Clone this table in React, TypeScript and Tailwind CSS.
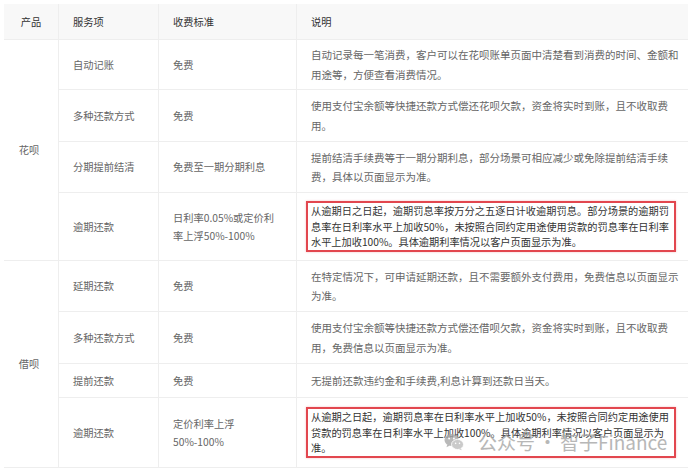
import React from 'react';

type Line = { t: string; w?: number };
type Row = {
  service: string;
  fee: string[];
  desc: Line[];
  highlight?: boolean;
};

const huabei: Row[] = [
  {
    service: '自动记账',
    fee: ['免费'],
    desc: [{ t: '自动记录每一笔消费，客户可以在花呗账单页面中清楚看到消费的时间、金额和', w: 358 }, { t: '用途等，方便查看消费情况。' }],
  },
  {
    service: '多种还款方式',
    fee: ['免费'],
    desc: [{ t: '使用支付宝余额等快捷还款方式偿还花呗欠款，资金将实时到账，且不收取费', w: 347 }, { t: '用。' }],
  },
  {
    service: '分期提前结清',
    fee: ['免费至一期分期利息'],
    desc: [{ t: '提前结清手续费等于一期分期利息，部分场景可相应减少或免除提前结清手续', w: 348 }, { t: '费，具体以页面显示为准。' }],
  },
  {
    service: '逾期还款',
    fee: ['日利率0.05%或定价利', '率上浮50%-100%'],
    desc: [
      { t: '从逾期日之日起，逾期罚息率按万分之五逐日计收逾期罚息。部分场景的逾期罚', w: 358 },
      { t: '息率在日利率水平上加收50%，未按照合同约定用途使用贷款的罚息率在日利率', w: 358 },
      { t: '水平上加收100%。具体逾期利率情况以客户页面显示为准。' },
    ],
    highlight: true,
  },
];

const jiebei: Row[] = [
  {
    service: '延期还款',
    fee: ['免费'],
    desc: [{ t: '在特定情况下，可申请延期还款，且不需要额外支付费用，免费信息以页面显示', w: 358 }, { t: '为准。' }],
  },
  {
    service: '多种还款方式',
    fee: ['免费'],
    desc: [{ t: '使用支付宝余额等快捷还款方式偿还借呗欠款，资金将实时到账，且不收取费', w: 347 }, { t: '用，免费信息以页面显示为准。' }],
  },
  {
    service: '提前还款',
    fee: ['免费'],
    desc: [{ t: '无提前还款违约金和手续费,利息计算到还款日当天。' }],
  },
  {
    service: '逾期还款',
    fee: ['定价利率上浮', '50%-100%'],
    desc: [
      { t: '从逾期之日起，逾期罚息率在日利率水平上加收50%，未按照合同约定用途使用', w: 358 },
      { t: '贷款的罚息率在日利率水平上加收100%。具体逾期利率情况以客户页面显示为', w: 353 },
      { t: '准。' },
    ],
    highlight: true,
  },
];

const cell = 'flex items-center border-b border-r border-[#eeeeee] px-[14px]';

function DescLines({ lines }: { lines: Line[] }) {
  return (
    <div>
      {lines.map((l, i) =>
        l.w ? (
          <div key={i} className="whitespace-nowrap text-justify [text-align-last:justify]" style={{ width: l.w }}>
            {l.t}
          </div>
        ) : (
          <div key={i} className="whitespace-nowrap">
            {l.t}
          </div>
        ),
      )}
    </div>
  );
}

function RowCells({ row }: { row: Row }) {
  return (
    <>
      <div className={cell}>{row.service}</div>
      <div className={cell + ' leading-[18px]'}>
        <div>
          {row.fee.map((f, i) => (
            <div key={i} className="whitespace-nowrap">
              {f}
            </div>
          ))}
        </div>
      </div>
      <div className={cell + ' border-r-0 text-[10.5px]'}>
        {row.highlight ? (
          <div className="-mx-[5px] w-[370px] border-2 border-[#e2474f] px-[3px] text-[10.2px] leading-[15.5px] text-[#333] shadow-[0_0_2px_rgba(226,71,79,0.35)]">
            <DescLines lines={row.desc} />
          </div>
        ) : (
          <div className="leading-[19.5px]">
            <DescLines lines={row.desc} />
          </div>
        )}
      </div>
    </>
  );
}

function WeChatIcon() {
  return (
    <svg width="20" height="18" viewBox="0 0 21 18">
      <ellipse cx="8" cy="7" rx="7.5" ry="6.3" fill="#a8a8a8" />
      <path d="M3.5 11.5 L2.6 14.6 L6.2 12.6 Z" fill="#a8a8a8" />
      <circle cx="5.4" cy="5.4" r="1" fill="#fff" />
      <circle cx="10.4" cy="5.4" r="1" fill="#fff" />
      <ellipse cx="14.2" cy="11.6" rx="6.3" ry="5.3" fill="#bdbdbd" stroke="#fff" strokeWidth="0.9" />
      <path d="M17.6 15.6 L18.6 17.6 L15.6 16.4 Z" fill="#bdbdbd" />
      <circle cx="12.2" cy="10.4" r="0.85" fill="#fff" />
      <circle cx="16.3" cy="10.4" r="0.85" fill="#fff" />
    </svg>
  );
}

export default function App() {
  return (
    <div
      className="relative h-[471px] w-[692px] overflow-hidden bg-white pl-[4px] pt-[4px] text-[10.25px] text-[#666]"
      style={{ fontFamily: '"Noto Sans CJK SC", "Noto Sans", sans-serif' }}
    >
      <div className="grid w-[684px] grid-cols-[55px_100px_138px_391px] grid-rows-[36px_50px_52px_51px_68px_51px_52px_34px_70px]">
        <div className="flex items-center justify-center border-b border-r border-[#eeeeee] bg-[#f8f8f8] text-[#333]">产品</div>
        <div className={cell + ' bg-[#f8f8f8] text-[#333]'}>服务项</div>
        <div className={cell + ' bg-[#f8f8f8] text-[#333]'}>收费标准</div>
        <div className={cell + ' border-r-0 bg-[#f8f8f8] text-[#333]'}>说明</div>

        <div className="row-span-4 flex items-center justify-center border-b border-r border-[#eeeeee] pr-[4px]">花呗</div>
        {huabei.map((r, i) => (
          <RowCells key={i} row={r} />
        ))}

        <div className="row-span-4 flex items-center justify-center border-b border-r border-[#eeeeee] pr-[4px]">借呗</div>
        {jiebei.map((r, i) => (
          <RowCells key={i} row={r} />
        ))}
      </div>

      <div className="absolute left-[444px] top-[431px] flex items-center whitespace-nowrap text-[19px] leading-[22px] text-[#a6a6a6] opacity-80">
        <WeChatIcon />
        <span className="ml-[14px]">公众号</span>
        <span className="mx-[3px]">·</span>
        <span>智子Finance</span>
      </div>
    </div>
  );
}
